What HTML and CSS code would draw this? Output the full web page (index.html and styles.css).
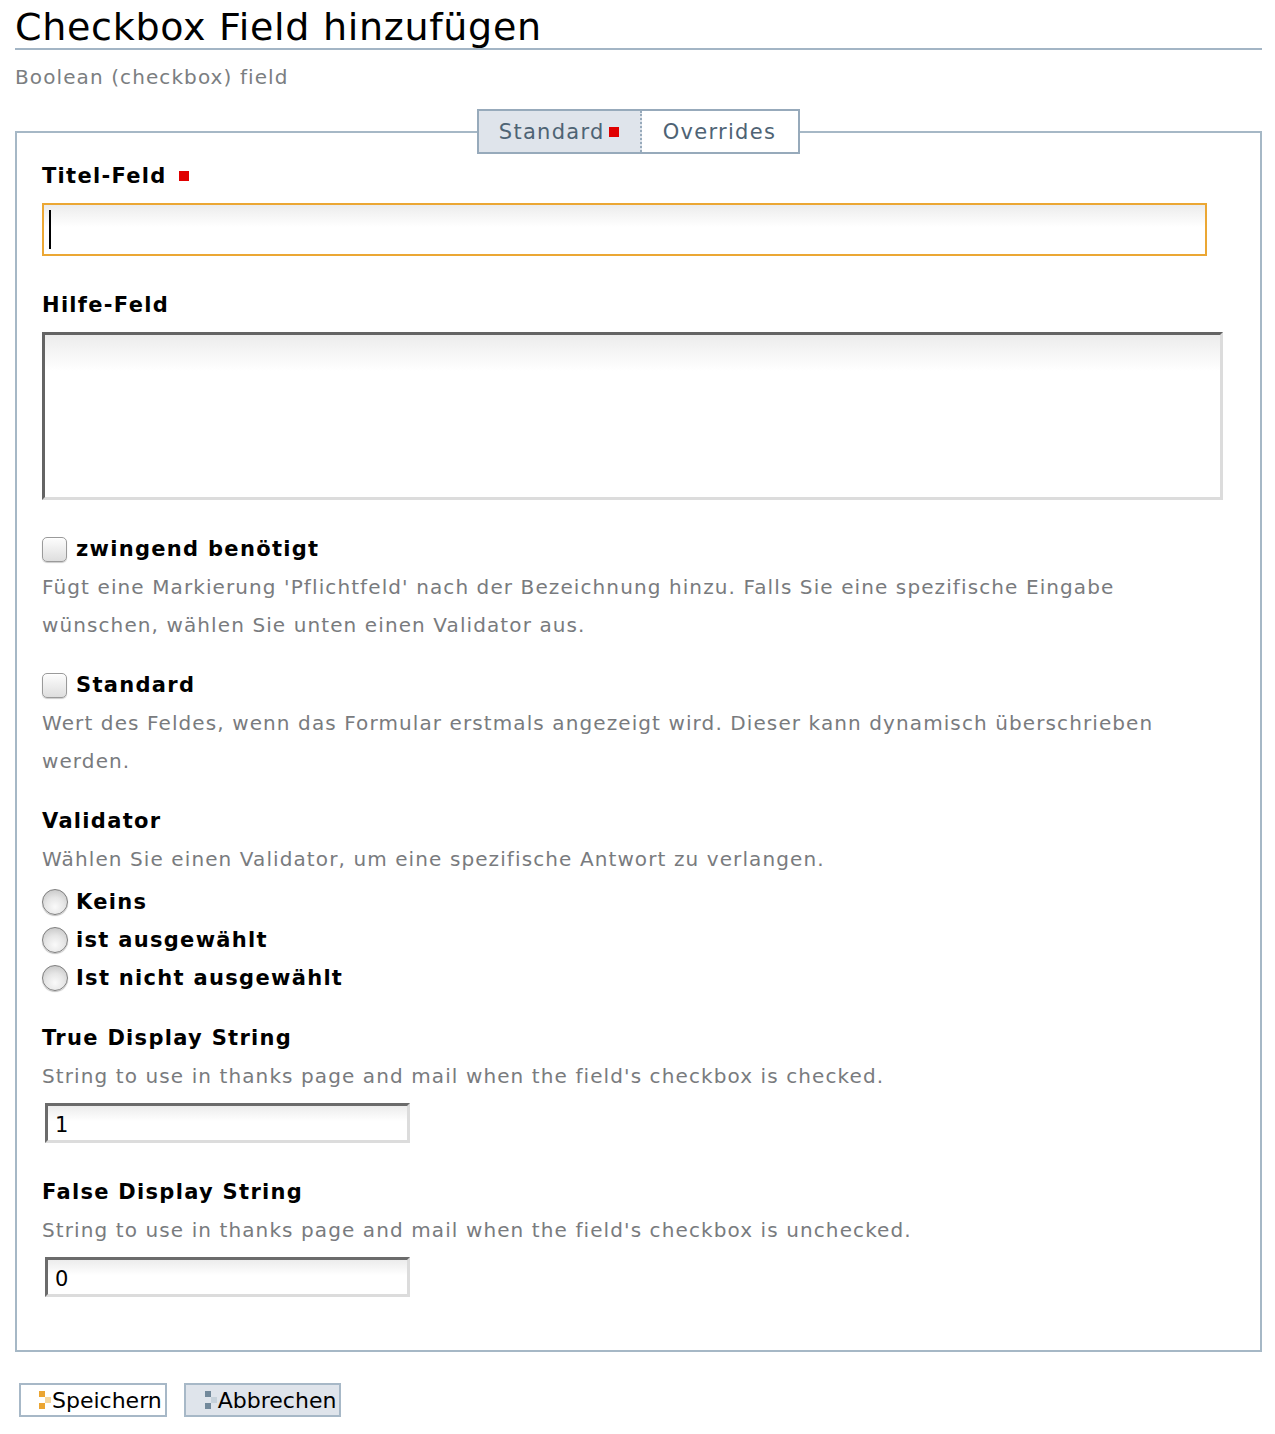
FILE: index.html
```html
<!DOCTYPE html>
<html lang="de">
<head>
<meta charset="utf-8">
<title>Checkbox Field hinzufügen</title>
<link rel="stylesheet" href="styles.css">
</head>
<body>
<div class="page">
  <h1 class="title">Checkbox Field hinzufügen</h1>
  <p class="subtitle">Boolean (checkbox) field</p>

  <form class="form">
    <fieldset class="box">
      <legend class="tabs">
        <span class="tab tab-active">Standard <span class="req"></span></span>
        <span class="tab">Overrides</span>
      </legend>

      <div class="field">
        <div class="label">Titel-Feld <span class="req"></span></div>
        <div class="text-input focused"><span class="caret"></span></div>
      </div>

      <div class="field">
        <div class="label">Hilfe-Feld</div>
        <div class="textarea"></div>
      </div>

      <div class="field">
        <div class="check-row"><span class="checkbox"></span><span class="label">zwingend benötigt</span></div>
        <div class="help">Fügt eine Markierung 'Pflichtfeld' nach der Bezeichnung hinzu. Falls Sie eine spezifische Eingabe wünschen, wählen Sie unten einen Validator aus.</div>
      </div>

      <div class="field">
        <div class="check-row"><span class="checkbox"></span><span class="label">Standard</span></div>
        <div class="help">Wert des Feldes, wenn das Formular erstmals angezeigt wird. Dieser kann dynamisch überschrieben werden.</div>
      </div>

      <div class="field">
        <div class="label">Validator</div>
        <div class="help">Wählen Sie einen Validator, um eine spezifische Antwort zu verlangen.</div>
        <div class="radios">
          <div class="check-row"><span class="radio"></span><span class="label">Keins</span></div>
          <div class="check-row"><span class="radio"></span><span class="label">ist ausgewählt</span></div>
          <div class="check-row"><span class="radio"></span><span class="label">Ist nicht ausgewählt</span></div>
        </div>
      </div>

      <div class="field">
        <div class="label">True Display String</div>
        <div class="help">String to use in thanks page and mail when the field's checkbox is checked.</div>
        <div class="small-input">1</div>
      </div>

      <div class="field">
        <div class="label">False Display String</div>
        <div class="help">String to use in thanks page and mail when the field's checkbox is unchecked.</div>
        <div class="small-input">0</div>
      </div>
    </fieldset>

    <div class="buttons">
      <button type="button" class="btn btn-save"><span class="btn-icon"><i class="sq a"></i><i class="sq b"></i><i class="sq c"></i></span>Speichern</button>
      <button type="button" class="btn btn-cancel"><span class="btn-icon"><i class="sq a"></i><i class="sq b"></i><i class="sq c"></i></span>Abbrechen</button>
    </div>
  </form>
</div>
</body>
</html>
```

FILE: styles.css
```css
* { box-sizing: border-box; }
html, body { margin: 0; padding: 0; background: #fff; }
body {
  font-family: "DejaVu Sans", "Liberation Sans", sans-serif;
  color: #000;
}
.page { padding: 0 13px 0 15px; }

.title {
  margin: 0;
  padding-top: 6px;
  font-size: 38px;
  font-weight: normal;
  line-height: 42px;
  letter-spacing: 0.7px;
  border-bottom: 2px solid #a3b5c5;
}
.subtitle {
  margin: 0;
  padding-top: 14px;
  font-size: 20px;
  line-height: 26px;
  letter-spacing: 1.1px;
  color: #7b7e81;
}

.form { margin-top: 19px; }
.box {
  margin: 0;
  padding: 3px 25px 45px 25px;
  border: 2px solid #a6b8c6;
  min-width: 0;
}
.tabs {
  margin: 0 auto;
  padding: 0;
  display: flex;
  border: 2px solid #97aabb;
}
.tab {
  display: flex;
  align-items: center;
  height: 41px;
  padding: 0 22px 0 21px;
  font-size: 21px;
  letter-spacing: 1.3px;
  color: #4e6374;
  background: #fff;
}
.tab-active {
  background: #dfe4eb;
  border-right: 2px dotted #97aabb;
  padding: 0 21px 0 20px;
}
.tab .req { margin-left: 4px; }
.req {
  display: inline-block;
  width: 10px;
  height: 10px;
  background: #e00000;
  vertical-align: 2px;
}

.field { display: flow-root; margin-bottom: 22px; }
.field:last-child { margin-bottom: 0; }
.label {
  font-size: 21px;
  font-weight: bold;
  line-height: 38px;
  letter-spacing: 1.3px;
}
.label .req { margin-left: 4px; }

.text-input {
  position: relative;
  margin: 8px 0;
  width: 1165px;
  height: 53px;
  border: 2px solid #eba734;
  background: linear-gradient(#ececec, #fff 45%);
}
.caret {
  position: absolute;
  left: 5px;
  top: 5px;
  width: 2px;
  height: 39px;
  background: #000;
}
.textarea {
  margin: 8px 0;
  width: 1181px;
  height: 168px;
  border: 3px solid #dcdcdc;
  border-top-color: #646464;
  border-left-color: #646464;
  background: linear-gradient(#ececec, #fff 22%);
}

.check-row {
  display: flex;
  align-items: center;
  height: 38px;
}
.checkbox {
  width: 25px;
  height: 25px;
  margin-right: 9px;
  border: 1px solid #9a9a9a;
  border-radius: 5px;
  background: linear-gradient(#fdfdfd, #dedede);
  box-shadow: inset 0 1px 1px rgba(255,255,255,0.8), 0 1px 1px rgba(0,0,0,0.2);
}
.radio {
  width: 26px;
  height: 26px;
  margin-right: 8px;
  border: 1px solid #7e7e7e;
  border-radius: 50%;
  background: radial-gradient(circle at 50% 70%, #fafafa 0%, #e6e6e6 45%, #bdbdbd 100%);
  box-shadow: 0 1px 1px rgba(0,0,0,0.25);
}
.help {
  font-size: 20px;
  line-height: 38px;
  color: #797b7e;
  letter-spacing: 1.1px;
}
.radios { margin-top: 5px; }

.small-input {
  margin: 8px 0 8px 3px;
  width: 365px;
  height: 40px;
  padding: 4px 7px 0;
  border: 3px solid #dcdcdc;
  border-top-color: #6b6b6b;
  border-left-color: #6b6b6b;
  background: linear-gradient(#ececec, #fff 45%);
  font-size: 21px;
  line-height: 30px;
}

.buttons {
  display: flex;
  gap: 17px;
  margin: 31px 0 0 4px;
}
.btn {
  display: flex;
  align-items: center;
  height: 34px;
  padding: 0 3px 0 18px;
  border: 2px solid #a7b8c7;
  background: #fff;
  font-family: inherit;
  font-size: 22px;
  color: #000;
  cursor: pointer;
}
.btn-cancel { background: #dfe4eb; padding-left: 19px; }
.btn-icon {
  position: relative;
  width: 13px;
  height: 18px;
  margin-right: 0;
}
.sq { position: absolute; width: 6px; height: 6px; }
.sq.a { left: 0; top: 0; }
.sq.b { left: 6px; top: 6px; }
.sq.c { left: 0; top: 12px; }
.btn-save .sq.a, .btn-save .sq.c { background: #eba532; }
.btn-save .sq.b { background: #f6d79e; }
.btn-cancel .sq.a, .btn-cancel .sq.c { background: #72899b; }
.btn-cancel .sq.b { background: #c6d1da; }
```
